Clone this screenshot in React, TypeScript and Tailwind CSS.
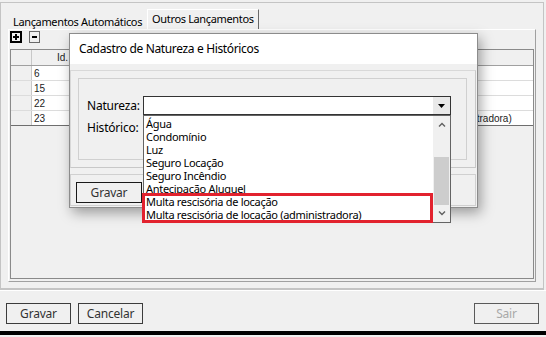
import React from 'react';

const naturezas = [
  'Água',
  'Condomínio',
  'Luz',
  'Seguro Locação',
  'Seguro Incêndio',
  'Antecipação Aluguel',
  'Multa rescisória de locação',
  'Multa rescisória de locação (administradora)',
];

// only the cells that are not under the dialog are filled in
const lancamentos = [
  { id: '6', historico: '' },
  { id: '15', historico: '' },
  { id: '22', historico: '' },
  { id: '23', historico: 'Multa rescisória de locação (administradora)' },
];

const Chevron = ({ up }: { up?: boolean }) => (
  <svg width="8" height="5" viewBox="0 0 8 5">
    <polyline
      points={up ? '1,4.5 4,1.5 7,4.5' : '1,0.5 4,3.5 7,0.5'}
      fill="none"
      stroke="#606060"
      strokeWidth="1.4"
    />
  </svg>
);

const WinButton = ({ label, disabled, dark }: { label: string; disabled?: boolean; dark?: boolean }) => (
  <div
    className={
      dark
        ? 'flex h-[21px] w-[66px] items-center justify-center border border-[#1a1a1a] bg-[#f0f0f0] text-[12px] tracking-[-0.2px] text-[#333]'
        : disabled
          ? 'flex h-[21px] w-[65px] items-center justify-center border border-[#5a5a5a] bg-[#f0f0f0] text-[12px] tracking-[-0.2px] text-[#a8a8a8]'
          : 'flex h-[21px] w-[65px] items-center justify-center border border-[#3c3c3c] bg-[#f0f0f0] text-[12px] tracking-[-0.2px] text-[#333]'
    }
  >
    {label}
  </div>
);

export default function App() {
  return (
    <div className="relative h-[337px] w-[546px] overflow-hidden bg-[#f0f0f0] font-['Noto_Sans',sans-serif] text-[12px] text-black">
      <div className="flex h-full flex-col">
        {/* main frame with tabs */}
        <div className="mt-[2px] flex h-[288px] w-[544px] flex-col border border-b-2 border-[#c4c4c4] px-[7px]">
          {/* tab strip */}
          <div className="flex h-[26px] items-end text-[11px] tracking-[-0.35px]">
            <div className="flex h-[17px] items-center px-[5px] pt-[1px] leading-none">Lançamentos Automáticos</div>
            <div className="flex h-[20px] items-start border-t border-l border-r border-t-white border-l-white border-r-[#696969] px-[4px] pt-[3px] leading-none">
              Outros Lançamentos
            </div>
          </div>

          {/* tab page */}
          <div className="flex h-[253px] flex-col border border-t-white border-l-white border-r-[#a0a0a0] border-b-[#a0a0a0] px-[1px]">
            {/* +/- toolbar */}
            <div className="flex h-[19px] items-start gap-[7px] pt-[1px]">
              <div className="flex h-[12px] w-[12px] items-center justify-center border-2 border-black bg-[#f0f0f0]">
                <svg width="8" height="8" viewBox="0 0 8 8">
                  <rect x="3" y="1" width="2" height="6" fill="#000" />
                  <rect x="1" y="3" width="6" height="2" fill="#000" />
                </svg>
              </div>
              <div className="flex h-[12px] w-[11px] items-center justify-center border border-[#6a6a6a] bg-[#f0f0f0]">
                <svg width="5" height="2" viewBox="0 0 5 2">
                  <rect x="0" y="0" width="5" height="2" fill="#000" />
                </svg>
              </div>
            </div>

            {/* grid */}
            <div className="flex h-[230px] flex-col border border-[#8a8a8a] font-['Liberation_Sans',sans-serif] text-[10px] text-[#222]">
              <div className="flex h-[16px] border-b border-[#a0a0a0] bg-[#f0f0f0]">
                <div className="w-[21px] border-r border-[#c8c8c8]" />
                <div className="flex w-[40px] items-center justify-end border-r border-[#c8c8c8] pr-[3px]">Id.</div>
                <div className="w-[241px] border-r border-[#c8c8c8]" />
                <div className="flex-1" />
              </div>
              {lancamentos.map((l, i) => (
                <div
                  key={l.id}
                  className={
                    i === lancamentos.length - 1
                      ? 'flex h-[15px] border-b border-[#6e6e6e]'
                      : 'flex h-[15px] border-b border-[#dcdcdc]'
                  }
                >
                  <div className="w-[21px] border-r border-[#c8c8c8] bg-[#f0f0f0]" />
                  <div className="flex w-[40px] items-center border-r border-[#dcdcdc] bg-white pl-[2px]">{l.id}</div>
                  <div className="w-[241px] border-r border-[#dcdcdc] bg-white" />
                  <div className="flex flex-1 items-center whitespace-nowrap bg-white pl-[2px]">{l.historico}</div>
                </div>
              ))}
            </div>
          </div>
        </div>

        {/* bottom bar */}
        <div className="flex h-[41px] items-start justify-between border-t border-white px-[6px] pt-[12px]">
          <div className="flex gap-[7px]">
            <WinButton label="Gravar" />
            <WinButton label="Cancelar" />
          </div>
          <div className="pr-[1px]">
            <WinButton label="Sair" disabled />
          </div>
        </div>
        <div className="h-[4px] bg-black" />
      </div>

      {/* dialog */}
      <div className="absolute left-[69px] top-[33px] flex h-[175px] w-[409px] flex-col border border-[#8c8c8c] bg-[#f0f0f0] shadow-[3px_5px_12px_rgba(0,0,0,0.35)]">
        <div className="flex h-[30px] items-center bg-white pl-[9px] text-[12px] tracking-[-0.35px]">
          Cadastro de Natureza e Históricos
        </div>
        <div className="flex flex-1 flex-col pt-[6px]">
          <div className="mr-[1px] h-[98px] border border-t-[#d8d8d8] border-l-[#d8d8d8] border-r-[#c8c8c8] border-b-[#c8c8c8] pl-[7px] pr-[8px] pt-[7px]">
            <div className="h-[82px] border border-[#d0d0d0] pl-[8px] pt-[17px] tracking-[-0.2px]">
              <div className="flex items-center">
                <div className="w-[56px]">Natureza:</div>
                <div className="flex h-[19px] w-[308px] items-stretch border border-[#333] bg-white">
                  <div className="flex-1" />
                  <div className="flex w-[17px] items-center justify-center bg-[#e9e9e9]">
                    <svg width="7" height="4" viewBox="0 0 7 4">
                      <polygon points="0,0 7,0 3.5,4" fill="#000" />
                    </svg>
                  </div>
                </div>
              </div>
              <div className="mt-[6px] flex h-[14px] items-center">
                <div className="w-[56px]">Histórico:</div>
              </div>
            </div>
          </div>
          <div className="mr-[1px] mt-[6px] h-[32px] border border-[#d0d0d0] pl-[5px] pt-[7px]">
            <WinButton label="Gravar" dark />
          </div>
        </div>
      </div>

      {/* open dropdown list */}
      <div className="absolute left-[143px] top-[115px] flex h-[108px] w-[308px] border border-[#646464] bg-white">
        <div className="flex flex-1 flex-col pl-[2px] pt-[1px] text-[11px] tracking-[-0.3px]">
          {naturezas.map((n) => (
            <div key={n} className="flex h-[13px] items-center whitespace-nowrap leading-none">
              {n}
            </div>
          ))}
        </div>
        <div className="flex w-[17px] flex-col items-center bg-[#f0f0f0]">
          <div className="flex h-[17px] items-center justify-center">
            <Chevron up />
          </div>
          <div className="mt-[24px] h-[48px] w-[15px] bg-[#cdcdcd]" />
          <div className="flex flex-1 items-center justify-center">
            <Chevron />
          </div>
        </div>
      </div>

      {/* highlight annotation */}
      <div className="absolute left-[142px] top-[193px] h-[30px] w-[291px] border-[3px] border-[#e2222e]" />
    </div>
  );
}
